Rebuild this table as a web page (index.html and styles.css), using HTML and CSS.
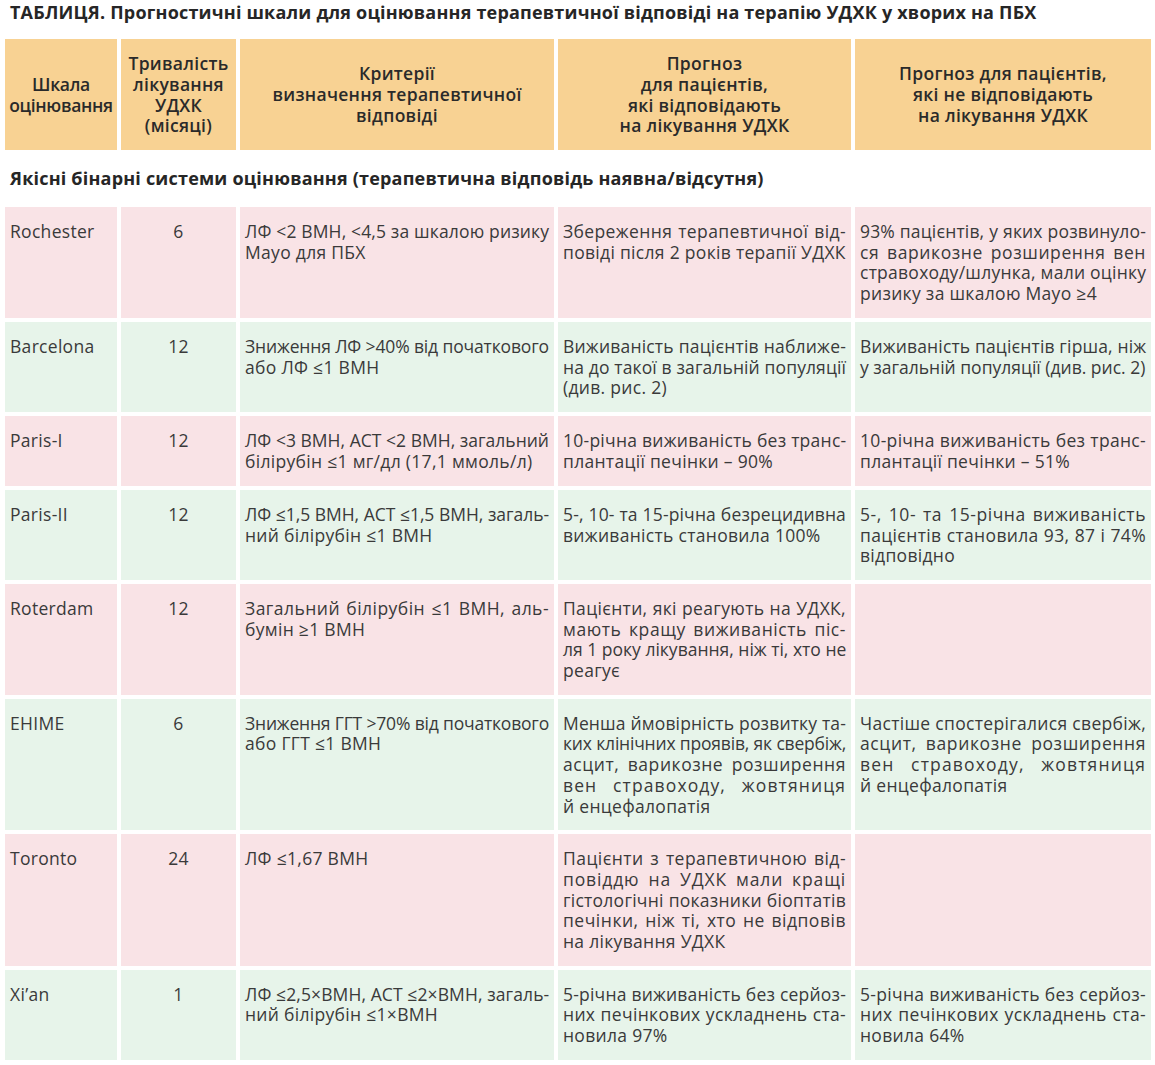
FILE: index.html
```html
<!DOCTYPE html>
<html lang="uk">
<head>
<meta charset="utf-8">
<link rel="stylesheet" href="styles.css">
</head>
<body>
<div class="page">
  <h1 class="title">ТАБЛИЦЯ. Прогностичні шкали для оцінювання терапевтичної відповіді на терапію УДХК у хворих на ПБХ</h1>
  <div class="row head">
    <div class="cell">Шкала<br>оцінювання</div>
    <div class="cell">Тривалість<br>лікування<br>УДХК<br>(місяці)</div>
    <div class="cell">Критерії<br>визначення терапевтичної<br>відповіді</div>
    <div class="cell">Прогноз<br>для пацієнтів,<br>які відповідають<br>на лікування УДХК</div>
    <div class="cell">Прогноз для пацієнтів,<br>які не відповідають<br>на лікування УДХК</div>
  </div>
  <h2 class="section">Якісні бінарні системи оцінювання (терапевтична відповідь наявна/відсутня)</h2>
  <div class="rows">
    <div class="row pink">
      <div class="cell">Rochester</div>
      <div class="cell num">6</div>
      <div class="cell"><span>ЛФ &lt;2 ВМН, &lt;4,5 за шкалою ризику</span><span>Mayo для ПБХ</span></div>
      <div class="cell"><span>Збереження терапевтичної від-</span><span>повіді після 2 років терапії УДХК</span></div>
      <div class="cell"><span>93% пацієнтів, у яких розвинуло-</span><span>ся варикозне розширення вен</span><span>стравоходу/шлунка, мали оцінку</span><span>ризику за шкалою Mayo ≥4</span></div>
    </div>
    <div class="row green">
      <div class="cell">Barcelona</div>
      <div class="cell num">12</div>
      <div class="cell"><span>Зниження ЛФ &gt;40% від початкового</span><span>або ЛФ ≤1 ВМН</span></div>
      <div class="cell"><span>Виживаність пацієнтів наближе-</span><span>на до такої в загальній популяції</span><span>(див. рис. 2)</span></div>
      <div class="cell"><span>Виживаність пацієнтів гірша, ніж</span><span>у загальній популяції (див. рис. 2)</span></div>
    </div>
    <div class="row pink two">
      <div class="cell">Paris-I</div>
      <div class="cell num">12</div>
      <div class="cell"><span>ЛФ &lt;3 ВМН, АСТ &lt;2 ВМН, загальний</span><span>білірубін ≤1 мг/дл (17,1 ммоль/л)</span></div>
      <div class="cell"><span>10-річна виживаність без транс-</span><span>плантації печінки – 90%</span></div>
      <div class="cell"><span>10-річна виживаність без транс-</span><span>плантації печінки – 51%</span></div>
    </div>
    <div class="row green">
      <div class="cell">Paris-II</div>
      <div class="cell num">12</div>
      <div class="cell"><span>ЛФ ≤1,5 ВМН, АСТ ≤1,5 ВМН, загаль-</span><span>ний білірубін ≤1 ВМН</span></div>
      <div class="cell"><span>5-, 10- та 15-річна безрецидивна</span><span>виживаність становила 100%</span></div>
      <div class="cell"><span>5-, 10- та 15-річна виживаність</span><span>пацієнтів становила 93, 87 і 74%</span><span>відповідно</span></div>
    </div>
    <div class="row pink">
      <div class="cell">Roterdam</div>
      <div class="cell num">12</div>
      <div class="cell"><span>Загальний білірубін ≤1 ВМН, аль-</span><span>бумін ≥1 ВМН</span></div>
      <div class="cell"><span>Пацієнти, які реагують на УДХК,</span><span>мають кращу виживаність піс-</span><span>ля 1 року лікування, ніж ті, хто не</span><span>реагує</span></div>
      <div class="cell"></div>
    </div>
    <div class="row green">
      <div class="cell">EHIME</div>
      <div class="cell num">6</div>
      <div class="cell"><span>Зниження ГГТ &gt;70% від початкового</span><span>або ГГТ ≤1 ВМН</span></div>
      <div class="cell"><span>Менша ймовірність розвитку та-</span><span>ких клінічних проявів, як свербіж,</span><span>асцит, варикозне розширення</span><span>вен стравоходу, жовтяниця</span><span>й енцефалопатія</span></div>
      <div class="cell"><span>Частіше спостерігалися свербіж,</span><span>асцит, варикозне розширення</span><span>вен стравоходу, жовтяниця</span><span>й енцефалопатія</span></div>
    </div>
    <div class="row pink">
      <div class="cell">Toronto</div>
      <div class="cell num">24</div>
      <div class="cell"><span>ЛФ ≤1,67 ВМН</span></div>
      <div class="cell"><span>Пацієнти з терапевтичною від-</span><span>повіддю на УДХК мали кращі</span><span>гістологічні показники біоптатів</span><span>печінки, ніж ті, хто не відповів</span><span>на лікування УДХК</span></div>
      <div class="cell"></div>
    </div>
    <div class="row green">
      <div class="cell">Xi’an</div>
      <div class="cell num">1</div>
      <div class="cell"><span>ЛФ ≤2,5×ВМН, АСТ ≤2×ВМН, загаль-</span><span>ний білірубін ≤1×ВМН</span></div>
      <div class="cell"><span>5-річна виживаність без серйоз-</span><span>них печінкових ускладнень ста-</span><span>новила 97%</span></div>
      <div class="cell"><span>5-річна виживаність без серйоз-</span><span>них печінкових ускладнень ста-</span><span>новила 64%</span></div>
    </div>
  </div>
</div>
<script src="script.js"></script>
</body>
</html>
```

FILE: styles.css
```css
html, body {
  margin: 0;
  padding: 0;
  background: #ffffff;
}

.page {
  padding: 0 4px 0 5px;
  font-family: "Open Sans", "Noto Sans", sans-serif;
  color: #3a3a3a;
}

.title {
  margin: 0 0 15px 0;
  padding-left: 5px;
  font-size: 18px;
  line-height: 24px;
  font-weight: 700;
  letter-spacing: 0.2px;
  color: #262626;
  white-space: nowrap;
}

.row {
  display: grid;
  grid-template-columns: 112px 115px 314px 293px 296px;
  column-gap: 4px;
}

.head .cell {
  height: 111px;
  background: #f8d293;
  display: flex;
  align-items: center;
  justify-content: center;
  text-align: center;
  font-size: 17.5px;
  line-height: 20.7px;
  font-weight: 600;
  letter-spacing: 0.3px;
  color: #2a2a2a;
}

.head .cell:first-child {
  letter-spacing: -0.3px;
}

.section {
  margin: 0;
  padding: 18px 0 18px 5px;
  font-size: 18px;
  line-height: 21px;
  font-weight: 700;
  letter-spacing: 0.2px;
  color: #262626;
  white-space: nowrap;
}

.rows {
  display: flex;
  flex-direction: column;
  gap: 4px;
}

.rows .cell {
  padding: 14px 5px 14px 5px;
  font-size: 17.5px;
  line-height: 20.7px;
  letter-spacing: 0.3px;
  color: #3a3a3a;
}

.rows .two .cell {
  padding-bottom: 14.5px;
}

.pink .cell { background: #f9e3e6; }
.green .cell { background: #e7f4ea; }

.cell.num {
  text-align: center;
}

.cell span {
  display: block;
  white-space: nowrap;
  text-align: justify;
  text-align-last: justify;
}

.cell span:last-child {
  text-align-last: auto;
}
```

FILE: script.js
```js
(function () {
  var BASE = 0.3;
  var lines = document.querySelectorAll('.rows .cell span');
  for (var i = 0; i < lines.length; i++) {
    var s = lines[i];
    var ls = BASE;
    var guard = 0;
    while (s.scrollWidth > s.clientWidth + 0.5 && guard < 60) {
      ls -= 0.05;
      s.style.letterSpacing = ls.toFixed(2) + 'px';
      guard++;
    }
    if (guard === 0 && s.nextElementSibling) {
      s.style.textAlignLast = 'left';
      var r = document.createRange();
      r.selectNodeContents(s);
      var w = r.getBoundingClientRect().width;
      s.style.textAlignLast = '';
      var extra = s.clientWidth - w;
      var n = s.textContent.length;
      if (extra > 0 && n > 0) {
        var add = Math.min(extra * 0.5 / n, 1.0);
        s.style.letterSpacing = (BASE + add).toFixed(2) + 'px';
      }
    }
  }
})();
```
